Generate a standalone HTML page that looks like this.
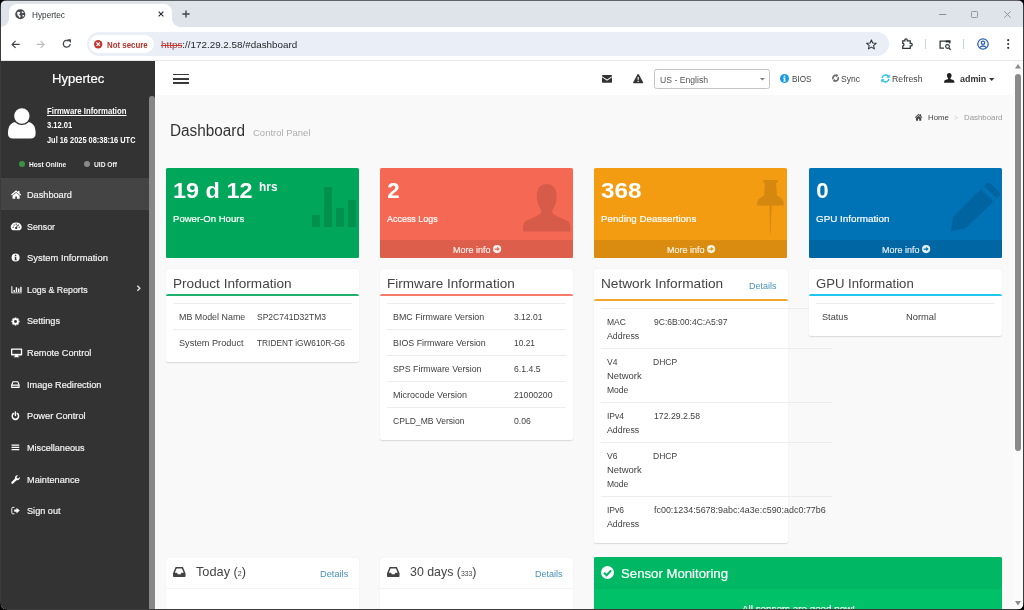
<!DOCTYPE html>
<html lang="en"><head><meta charset="utf-8"><title>Hypertec</title>
<style>
*{box-sizing:border-box;margin:0;padding:0}
html,body{width:1024px;height:610px;overflow:hidden;background:#000;font-family:"Liberation Sans",Arial,sans-serif}
.abs,.t,.i{position:absolute}
.t{white-space:nowrap;line-height:1;transform-origin:0 50%;display:block}
.i{display:block;overflow:visible}
#win{will-change:transform;position:absolute;left:0;top:0;width:1024px;height:610px;border-radius:7px 7px 8px 8px;overflow:hidden;background:#3b3b3b}
#tabstrip{left:1px;top:1px;width:1022px;height:26.4px;background:#dfe3ea}
#tab{left:8px;top:3.2px;width:163px;height:23.2px;background:#fff;border-radius:8px 8px 0 0}
#tab:before,#tab:after{content:"";position:absolute;bottom:0;width:8px;height:8px;background:radial-gradient(circle at 0 0,rgba(255,255,255,0) 7.5px,#fff 8px)}
#tab:before{left:-8px}
#tab:after{right:-8px;background:radial-gradient(circle at 100% 0,rgba(255,255,255,0) 7.5px,#fff 8px)}
#toolbar{left:1px;top:27.4px;width:1022px;height:33.6px;background:#fff;border-bottom:1px solid #e3e6ea}
#omni{left:85.5px;top:5px;width:802px;height:23.7px;border-radius:12px;background:#eaeff7}
#chip{left:2.5px;top:2.5px;width:65px;height:18.6px;border-radius:10px;background:#fff}
#page{left:1px;top:61px;width:1022px;height:547.5px;background:#f9f9f9;overflow:hidden}
#sidebar{left:0;top:0;width:154px;height:548px;background:#333}
#topbar{left:154px;top:0;width:858px;height:34px;background:#fff}
#content{left:154px;top:34px;width:858px;height:514px;background:#f9f9f9}
#vscroll{left:1011.5px;top:0;width:11px;height:548px;background:#fbfbfb}
.sbox{position:absolute;top:72.6px;width:193px;height:90.4px;border-radius:1.5px;overflow:hidden}
.sbox .ft{position:absolute;left:0;top:72.3px;width:100%;height:18.1px;background:rgba(0,0,0,.1)}
.box{position:absolute;background:#fff;border-radius:2px;box-shadow:0 .7px 1.2px rgba(0,0,0,.13)}
.box .ln{position:absolute;left:0;width:100%;height:4px;border-top:2px solid;border-radius:2px 2px 0 0;opacity:.88}
.sep{position:absolute;height:1px;background:#ececec}
</style></head>
<body>
<div id="win">
<div class="abs" style="left:0;top:0;width:1024px;height:1px;background:#5f6267"></div>
<div id="tabstrip" class="abs">
<div id="tab" class="abs">
<svg class="i" style="left:6.00px;top:4.90px" width="10.60" height="10.60" viewBox="0 0 16 16" ><circle cx="8" cy="8" r="7.6" fill="#474a4f"/><path fill="#fff" d="M3.2 5.2 Q5 3.6 7 4.4 Q8.6 5.4 7.6 6.8 Q6.2 7.4 6.4 8.8 Q7.6 9.4 8.6 10.4 Q8.4 12.4 6.8 13.4 Q6 11.6 5.2 10.4 Q3.2 9.4 3.4 7.4 Z M10.2 3.4 Q12.4 3.6 13.4 5.6 Q12.2 6.6 10.8 6 Q9.8 4.8 10.2 3.4 Z M11.4 8.6 Q13 8.6 13.8 9.4 Q13.4 11.2 12 12.2 Q11 10.6 11.4 8.6 Z"/></svg>
<span class="t" id="t0" style="left:23.00px;top:6.59px;font-size:8.4px;color:#33363a;transform:scaleX(0.9846);">Hypertec</span>
<svg class="i" style="left:148.80px;top:7.20px" width="6.00" height="6.00" viewBox="0 0 10 10" ><path stroke="#2a2c30" stroke-width="1.9" d="M1 1 L9 9 M9 1 L1 9"/></svg>
</div>
<svg class="i" style="left:181.00px;top:9.20px" width="8.00" height="8.00" viewBox="0 0 10 10" ><path stroke="#41454b" stroke-width="1.7" d="M5 0.5 V9.5 M0.5 5 H9.5"/></svg>
<svg class="i" style="left:938.40px;top:12.60px" width="7.20" height="1.00" viewBox="0 0 10 1" preserveAspectRatio="none"><rect width="10" height="1" fill="#8b8f96"/></svg>
<svg class="i" style="left:970.30px;top:10.20px" width="7.00" height="7.00" viewBox="0 0 10 10" ><rect x="0.7" y="0.7" width="8.6" height="8.6" rx="1.2" fill="none" stroke="#8b8f96" stroke-width="1.3"/></svg>
<svg class="i" style="left:1002.50px;top:10.20px" width="7.00" height="7.00" viewBox="0 0 10 10" ><path stroke="#8b8f96" stroke-width="1.3" d="M0.5 0.5 L9.5 9.5 M9.5 0.5 L0.5 9.5"/></svg>
</div>
<div id="toolbar" class="abs">
<svg class="i" style="left:10.40px;top:12.60px" width="9.20" height="8.80" viewBox="0 0 12 12" ><path fill="none" stroke="#41454b" stroke-width="1.6" d="M11.5 6 H1.5 M6 1.2 L1.2 6 L6 10.8"/></svg>
<svg class="i" style="left:35.40px;top:12.60px" width="9.20" height="8.80" viewBox="0 0 12 12" ><path fill="none" stroke="#b9bcc1" stroke-width="1.6" d="M0.5 6 H10.5 M6 1.2 L10.8 6 L6 10.8"/></svg>
<svg class="i" style="left:60.70px;top:12.10px" width="9.60" height="9.60" viewBox="0 0 12 12" ><path fill="none" stroke="#41454b" stroke-width="1.6" d="M10.2 6.2 A4.3 4.3 0 1 1 8.6 2.6"/><path fill="#41454b" d="M6.4 0.2 H11.2 V5 Z"/></svg>
<div id="omni" class="abs">
<div id="chip" class="abs"></div>
<svg class="i" style="left:7.30px;top:7.80px" width="8.40" height="8.40" viewBox="0 0 12 12" ><circle cx="6" cy="6" r="6" fill="#c5362e"/><path stroke="#fff" stroke-width="1.7" d="M3.6 3.6 L8.4 8.4 M8.4 3.6 L3.6 8.4"/></svg>
<span class="t" id="t1" style="left:20.50px;top:8.77px;font-size:8.3px;color:#b3322b;font-weight:700;transform:scaleX(0.9489);">Not secure</span>
<span class="t" id="t2" style="left:74.30px;top:7.77px;font-size:9.6px;color:#24272b;transform:scaleX(1.0253);"><span style="color:#a3383a;text-decoration:line-through;text-decoration-color:#d0362e">https</span>://172.29.2.58/#dashboard</span>
<svg class="i" style="left:779.85px;top:6.60px" width="10.80" height="10.80" viewBox="0 0 12 12" ><path fill="none" stroke="#30343a" stroke-width="1.15" stroke-linejoin="round" d="M6 1 L7.5 4.5 L11.3 4.8 L8.4 7.3 L9.3 11 L6 9 L2.7 11 L3.6 7.3 L0.7 4.8 L4.5 4.5 Z"/></svg>
</div>
<svg class="i" style="left:900.30px;top:11.00px" width="12.20" height="11.30" viewBox="0 0 14 13" ><path fill="none" stroke="#30343a" stroke-width="1.45" d="M2 3.4 H4.4 V2.3 Q4.4 0.9 5.8 0.9 Q7.2 0.9 7.2 2.3 V3.4 H10.6 V6.3 H11.6 Q12.9 6.3 12.9 7.7 Q12.9 9.1 11.6 9.1 H10.6 V12 H2 V9.3 Q3.4 9.3 3.4 7.7 Q3.4 6.1 2 6.1 Z"/></svg>
<div class="abs" style="left:924.2px;top:11.600000000000001px;width:1px;height:10.5px;background:#c9d2e3"></div>
<svg class="i" style="left:937.80px;top:12.20px" width="12.40" height="10.20" viewBox="0 0 14 12" ><path fill="none" stroke="#30343a" stroke-width="1.5" d="M5.6 9.6 H1 V1.2 H12.4 V4"/><rect x="7.6" y="0.5" width="5.5" height="2.4" fill="#30343a"/><circle cx="9.7" cy="7.7" r="2.2" fill="none" stroke="#30343a" stroke-width="1.35"/><path stroke="#30343a" stroke-width="1.6" d="M11.3 9.3 L13.4 11.4"/></svg>
<div class="abs" style="left:962.4px;top:11.600000000000001px;width:1px;height:10.5px;background:#c9d2e3"></div>
<svg class="i" style="left:975.70px;top:10.90px" width="12.00" height="12.00" viewBox="0 0 12 12" ><circle cx="6" cy="6" r="5.2" fill="none" stroke="#2b5bb8" stroke-width="1.25"/><circle cx="6" cy="4.7" r="1.7" fill="none" stroke="#2b5bb8" stroke-width="1.25"/><path fill="none" stroke="#2b5bb8" stroke-width="1.25" d="M2.6 9.6 Q6 6.4 9.4 9.6"/></svg>
<svg class="i" style="left:1005.60px;top:12.00px" width="2.40" height="10.00" viewBox="0 0 2.4 10" ><circle cx="1.2" cy="1.2" r="1.1" fill="#30343a"/><circle cx="1.2" cy="5" r="1.1" fill="#30343a"/><circle cx="1.2" cy="8.8" r="1.1" fill="#30343a"/></svg>
</div>
<div id="page" class="abs">
<aside id="sidebar" class="abs">
<span class="t" id="t3" style="left:50.75px;top:12.49px;font-size:12.3px;color:#fff;-webkit-text-stroke:.18px;transform:scaleX(1.0616);">Hypertec</span>
<svg class="i" style="left:6.80px;top:47.30px" width="27.60" height="30.60" viewBox="0 0 27.8 30.6" ><path fill="#fff" d="M0 25.5 Q0 13.8 9.5 13.8 H18.3 Q27.8 13.8 27.8 25.5 Q27.8 30.6 22.8 30.6 H5 Q0 30.6 0 25.5 Z"/><circle cx="13.95" cy="8" r="9.1" fill="#333"/><circle cx="13.95" cy="8" r="7.75" fill="#fff"/></svg>
<span class="t" id="t4" style="left:45.50px;top:45.50px;font-size:8.5px;color:#fff;font-weight:700;transform:scaleX(0.9148);text-decoration:underline;">Firmware Information</span>
<span class="t" id="t5" style="left:45.50px;top:60.30px;font-size:8.5px;color:#fff;font-weight:700;transform:scaleX(0.8916);">3.12.01</span>
<span class="t" id="t6" style="left:45.50px;top:75.20px;font-size:8.5px;color:#fff;font-weight:700;transform:scaleX(0.8711);">Jul 16 2025 08:38:16 UTC</span>
<div class="abs" style="left:17.8px;top:99.80000000000001px;width:6.4px;height:6.4px;border-radius:50%;background:#3b9342"></div>
<span class="t" id="t7" style="left:27.75px;top:99.74px;font-size:7.4px;color:#f4f4f4;font-weight:700;transform:scaleX(0.8979);">Host Online</span>
<div class="abs" style="left:83px;top:99.80000000000001px;width:6.4px;height:6.4px;border-radius:50%;background:#8a8a8a"></div>
<span class="t" id="t8" style="left:93.00px;top:99.74px;font-size:7.4px;color:#f4f4f4;font-weight:700;transform:scaleX(0.9036);">UID Off</span>
<div class="abs" style="left:0;top:116.6px;width:154px;height:32px;background:#444"></div>
<svg class="i" style="left:10.20px;top:129.00px" width="10.20" height="9.40" viewBox="0 0 16 16" preserveAspectRatio="none"><path fill="#fff" d="M8 0.6 L0 7.8 L1.2 9.2 L8 3.2 L14.8 9.2 L16 7.8 L13.4 5.4 V1.6 H11 V3.2 Z M8 4.6 L2.4 9.4 V15 H6.7 V11 H9.3 V15 H13.6 V9.4 Z"/></svg>
<span class="t" id="t9" style="left:26.40px;top:129.91px;font-size:9.2px;color:#f4f4f4;-webkit-text-stroke:.18px;transform:scaleX(0.9966);">Dashboard</span>
<svg class="i" style="left:9.90px;top:160.93px" width="10.40" height="8.80" viewBox="0 0 16 16" preserveAspectRatio="none"><path fill="#fff" d="M8 1 A7.9 7.9 0 0 0 1.5 14 Q1.8 14.8 2.6 14.8 H13.4 Q14.2 14.8 14.5 14 A7.9 7.9 0 0 0 8 1 Z"/><circle cx="8" cy="11" r="1.9" fill="#333"/><path d="M8 11 L10 5.4" stroke="#333" stroke-width="1.5"/><circle cx="3.4" cy="9.4" r="1.05" fill="#333"/><circle cx="12.6" cy="9.4" r="1.05" fill="#333"/><circle cx="4.8" cy="5.6" r="1.05" fill="#333"/><circle cx="8" cy="4" r="1.05" fill="#333"/><circle cx="11.4" cy="5.6" r="1.05" fill="#333"/></svg>
<span class="t" id="t10" style="left:26.40px;top:161.54px;font-size:9.2px;color:#f4f4f4;-webkit-text-stroke:.18px;transform:scaleX(0.9614);">Sensor</span>
<svg class="i" style="left:10.20px;top:192.36px" width="9.20" height="9.20" viewBox="0 0 16 16" preserveAspectRatio="none"><circle cx="8" cy="8" r="7" fill="#fff"/><path fill="#333" d="M6.9 3.2 H9.1 V5.2 H6.9 Z M6 6.6 H9.2 V11.4 H10.2 V12.8 H5.9 V11.4 H6.9 V8 H6 Z"/></svg>
<span class="t" id="t11" style="left:26.40px;top:193.17px;font-size:9.2px;color:#f4f4f4;-webkit-text-stroke:.18px;transform:scaleX(1.0220);">System Information</span>
<svg class="i" style="left:9.90px;top:223.99px" width="11.20" height="9.20" viewBox="0 0 16 16" preserveAspectRatio="none"><path fill="#fff" d="M0.5 2 H2 V13 H15.5 V14.5 H0.5 Z M3.6 8.5 H5.6 V12 H3.6 Z M6.8 4 H8.8 V12 H6.8 Z M10 6.2 H12 V12 H10 Z M13.2 3 H15.2 V12 H13.2 Z"/></svg>
<span class="t" id="t12" style="left:26.40px;top:224.80px;font-size:9.2px;color:#f4f4f4;-webkit-text-stroke:.18px;transform:scaleX(0.9569);">Logs &amp; Reports</span>
<svg class="i" style="left:135.20px;top:223.79px" width="5.00" height="6.40" viewBox="3 1 9 14" ><path fill="none" stroke="#e4e4e4" stroke-width="3" d="M5 2.5 L10.5 8 L5 13.5"/></svg>
<svg class="i" style="left:10.00px;top:255.72px" width="9.00" height="9.00" viewBox="0 0 16 16" preserveAspectRatio="none"><path fill="#fff" d="M15.25 6.53 L15.25 9.47 L13.32 9.76 L13.00 10.51 L14.17 12.09 L12.09 14.17 L10.51 13.00 L9.76 13.32 L9.47 15.25 L6.53 15.25 L6.24 13.32 L5.49 13.00 L3.91 14.17 L1.83 12.09 L3.00 10.51 L2.68 9.76 L0.75 9.47 L0.75 6.53 L2.68 6.24 L3.00 5.49 L1.83 3.91 L3.91 1.83 L5.49 3.00 L6.24 2.68 L6.53 0.75 L9.47 0.75 L9.76 2.68 L10.51 3.00 L12.09 1.83 L14.17 3.91 L13.00 5.49 L13.32 6.24 Z"/><circle cx="8" cy="8" r="2.5" fill="#333"/></svg>
<span class="t" id="t13" style="left:26.40px;top:256.43px;font-size:9.2px;color:#f4f4f4;-webkit-text-stroke:.18px;transform:scaleX(0.9939);">Settings</span>
<svg class="i" style="left:9.90px;top:286.95px" width="11.20" height="9.80" viewBox="0 0 16 16" preserveAspectRatio="none"><path fill="#fff" d="M1.2 1 H14.8 Q16 1 16 2.2 V11 Q16 12.2 14.8 12.2 H10 L10.4 13.8 H11.8 V15 H4.2 V13.8 H5.6 L6 12.2 H1.2 Q0 12.2 0 11 V2.2 Q0 1 1.2 1 Z"/><rect x="1.9" y="2.9" width="12.2" height="6.6" fill="#333"/></svg>
<span class="t" id="t14" style="left:26.40px;top:288.06px;font-size:9.2px;color:#f4f4f4;-webkit-text-stroke:.18px;transform:scaleX(1.0009);">Remote Control</span>
<svg class="i" style="left:10.20px;top:318.98px" width="8.80" height="9.00" viewBox="0 0 16 16" preserveAspectRatio="none"><path fill="none" stroke="#fff" stroke-width="2" stroke-linejoin="round" d="M1.2 9 L3.6 3.2 H12.4 L14.8 9 V13 H1.2 Z M1.2 9 H14.8"/><circle cx="12" cy="11" r="0.7" fill="#fff"/></svg>
<span class="t" id="t15" style="left:26.40px;top:319.69px;font-size:9.2px;color:#f4f4f4;-webkit-text-stroke:.18px;transform:scaleX(0.9978);">Image Redirection</span>
<svg class="i" style="left:10.20px;top:350.41px" width="8.80" height="9.40" viewBox="0 0 16 16" preserveAspectRatio="none"><path fill="none" stroke="#fff" stroke-width="2.7" stroke-linecap="round" d="M4.4 4.2 A5.7 5.7 0 1 0 11.6 4.2 M8 1.6 V7.4"/></svg>
<span class="t" id="t16" style="left:26.40px;top:351.32px;font-size:9.2px;color:#f4f4f4;-webkit-text-stroke:.18px;transform:scaleX(1.0065);">Power Control</span>
<svg class="i" style="left:10.10px;top:382.34px" width="8.80" height="8.80" viewBox="0 0 16 16" preserveAspectRatio="none"><path fill="#fff" d="M1 2.6 H15 V5 H1 Z M1 6.8 H15 V9.2 H1 Z M1 11 H15 V13.4 H1 Z"/></svg>
<span class="t" id="t17" style="left:26.40px;top:382.95px;font-size:9.2px;color:#f4f4f4;-webkit-text-stroke:.18px;transform:scaleX(0.9894);">Miscellaneous</span>
<svg class="i" style="left:10.10px;top:413.77px" width="9.20" height="9.20" viewBox="0 0 16 16" preserveAspectRatio="none"><path fill="#fff" d="M15.3 3.6 L12.6 6.3 L10.4 5.6 L9.7 3.4 L12.4 0.7 A4.4 4.4 0 0 0 7 6.3 L1 12.3 A1.9 1.9 0 0 0 3.7 15 L9.7 9 A4.4 4.4 0 0 0 15.3 3.6 Z"/></svg>
<span class="t" id="t18" style="left:26.40px;top:414.58px;font-size:9.2px;color:#f4f4f4;-webkit-text-stroke:.18px;transform:scaleX(0.9998);">Maintenance</span>
<svg class="i" style="left:10.10px;top:445.40px" width="9.20" height="9.20" viewBox="0 0 16 16" preserveAspectRatio="none"><path fill="none" stroke="#fff" stroke-width="1.6" d="M6 2.4 H3 Q1.4 2.4 1.4 4 V12 Q1.4 13.6 3 13.6 H6"/><path fill="#fff" d="M5.6 6 H9.6 V3 L15.2 8 L9.6 13 V10 H5.6 Z"/></svg>
<span class="t" id="t19" style="left:26.40px;top:446.21px;font-size:9.2px;color:#f4f4f4;-webkit-text-stroke:.18px;transform:scaleX(0.9965);">Sign out</span>
<div class="abs" style="left:148.3px;top:35.3px;width:5.7px;height:520px;background:#878787;border-radius:3px 3px 0 0"></div>
</aside>
<header id="topbar" class="abs">
<div class="abs" style="left:18.19999999999999px;top:12.75px;width:15.6px;height:1.7px;background:#3a3a3a"></div>
<div class="abs" style="left:18.19999999999999px;top:16.85000000000001px;width:15.6px;height:1.7px;background:#3a3a3a"></div>
<div class="abs" style="left:18.19999999999999px;top:20.950000000000003px;width:15.6px;height:1.7px;background:#3a3a3a"></div>
<svg class="i" style="left:447.25px;top:14.30px" width="10.00" height="7.80" viewBox="0.5 2 15 12" preserveAspectRatio="none"><path fill="#333" d="M0.5 3.2 Q0.5 2 1.7 2 H14.3 Q15.5 2 15.5 3.2 V3.8 L8 9 L0.5 3.8 Z M0.5 5.6 L8 10.8 L15.5 5.6 V12.8 Q15.5 14 14.3 14 H1.7 Q0.5 14 0.5 12.8 Z"/></svg>
<svg class="i" style="left:478.00px;top:12.80px" width="10.30" height="9.30" viewBox="0 0.8 16 14" preserveAspectRatio="none"><path fill="#333" d="M8 0.8 Q8.7 0.8 9.1 1.5 L15.7 13.4 Q16.3 14.8 14.8 14.8 H1.2 Q-0.3 14.8 0.3 13.4 L6.9 1.5 Q7.3 0.8 8 0.8 Z"/><path fill="#fff" d="M7 5.2 H9 L8.7 10 H7.3 Z M7.1 11 H8.9 V12.9 H7.1 Z"/></svg>
<div class="abs" style="left:499px;top:8px;width:116px;height:19.5px;border:1px solid #c4c4c4;border-radius:2.5px;background:#fff"></div>
<span class="t" id="t20" style="left:505.25px;top:14.91px;font-size:9.2px;color:#555;transform:scaleX(0.9400);">US - English</span>
<svg class="i" style="left:604.80px;top:16.60px" width="4.80" height="2.60" viewBox="2 5 12 6.5" preserveAspectRatio="none"><path fill="#777" d="M2 5 H14 L8 11.5 Z"/></svg>
<svg class="i" style="left:625.20px;top:13.00px" width="9.00" height="9.00" viewBox="1 1 14 14" ><circle cx="8" cy="8" r="7" fill="#1a9de0"/><path fill="#fff" d="M6.9 3.2 H9.1 V5.2 H6.9 Z M6 6.6 H9.2 V11.4 H10.2 V12.8 H5.9 V11.4 H6.9 V8 H6 Z"/></svg>
<span class="t" id="t21" style="left:636.50px;top:13.81px;font-size:9.2px;color:#444;transform:scaleX(0.8876);">BIOS</span>
<svg class="i" style="left:677.00px;top:13.10px" width="7.20" height="8.40" viewBox="1 0 14 16" preserveAspectRatio="none"><path fill="none" stroke="#6c6c6c" stroke-width="3.2" d="M3.2 10.2 A5.2 5.2 0 0 1 9.6 3.1 M12.8 5.8 A5.2 5.2 0 0 1 6.4 12.9"/><path fill="#6c6c6c" d="M8.2 0.2 L13.6 2.6 L9.4 6.8 Z M7.8 15.8 L2.4 13.4 L6.6 9.2 Z"/></svg>
<span class="t" id="t22" style="left:686.00px;top:13.81px;font-size:9.2px;color:#444;transform:scaleX(0.9297);">Sync</span>
<svg class="i" style="left:726.00px;top:13.00px" width="9.00" height="9.00" viewBox="0.5 0.5 15 15" ><path fill="none" stroke="#22bfe6" stroke-width="2.4" d="M2.2 7.2 A6 6 0 0 1 12.6 4.2 M13.8 8.8 A6 6 0 0 1 3.4 11.8"/><path fill="#22bfe6" d="M9.4 6.6 H15 V1 Z M6.6 9.4 H1 V15 Z"/></svg>
<span class="t" id="t23" style="left:737.00px;top:13.81px;font-size:9.2px;color:#444;transform:scaleX(0.9480);">Refresh</span>
<svg class="i" style="left:788.70px;top:12.00px" width="10.50" height="9.70" viewBox="0.8 0.6 14.4 14.4" preserveAspectRatio="none"><path fill="#222" d="M8 0.6 C10.2 0.6 11.2 2.2 11.2 4.4 C11.2 6.2 10.4 7.6 9.6 8.4 V9.6 C11.4 10.4 14.4 11 14.8 12.4 L15.2 15 H0.8 L1.2 12.4 C1.6 11 4.6 10.4 6.4 9.6 V8.4 C5.6 7.6 4.8 6.2 4.8 4.4 C4.8 2.2 5.8 0.6 8 0.6 Z"/></svg>
<span class="t" id="t24" style="left:804.70px;top:14.01px;font-size:9.2px;color:#333;font-weight:700;transform:scaleX(0.9718);">admin</span>
<svg class="i" style="left:834.20px;top:16.70px" width="5.40" height="3.00" viewBox="2 5 12 6.5" preserveAspectRatio="none"><path fill="#333" d="M2 5 H14 L8 11.5 Z"/></svg>
</header>
<main id="content" class="abs">
<span class="t" id="t25" style="left:15.00px;top:28.09px;font-size:15.6px;color:#333;transform:scaleX(0.9830);">Dashboard</span>
<span class="t" id="t26" style="left:97.50px;top:33.91px;font-size:9.2px;color:#adadad;transform:scaleX(1.0328);">Control Panel</span>
<svg class="i" style="left:759.90px;top:18.80px" width="7.20" height="6.60" viewBox="0.3 1.2 15.4 13.4" preserveAspectRatio="none"><path fill="#444" d="M8 0.6 L0 7.8 L1.2 9.2 L8 3.2 L14.8 9.2 L16 7.8 L13.4 5.4 V1.6 H11 V3.2 Z M8 4.6 L2.4 9.4 V15 H6.7 V11 H9.3 V15 H13.6 V9.4 Z"/></svg>
<span class="t" id="t27" style="left:773.00px;top:19.35px;font-size:7.5px;color:#444;transform:scaleX(1.0392);">Home</span>
<span class="t" id="t28" style="left:799.00px;top:19.35px;font-size:7.5px;color:#ccc;transform:scaleX(0.9110);">&gt;</span>
<span class="t" id="t29" style="left:808.60px;top:19.35px;font-size:7.5px;color:#999;transform:scaleX(1.0462);">Dashboard</span>
<div class="sbox" style="left:11px;background:#00a65a">
<div class="abs" style="left:146px;top:47.900000000000006px;width:8px;height:12.0px;background:rgba(0,0,0,.125)"></div>
<div class="abs" style="left:158px;top:19.900000000000006px;width:8px;height:40.0px;background:rgba(0,0,0,.125)"></div>
<div class="abs" style="left:170px;top:40.400000000000006px;width:7.5px;height:19.5px;background:rgba(0,0,0,.125)"></div>
<div class="abs" style="left:181.5px;top:32.400000000000006px;width:8.0px;height:27.5px;background:rgba(0,0,0,.125)"></div>
<span class="t" id="t30" style="left:7.00px;top:12.52px;font-size:22.3px;color:#fff;font-weight:700;transform:scaleX(1.0512);">19 d 12</span>
<span class="t" id="t31" style="left:93.00px;top:13.69px;font-size:12.3px;color:#fff;font-weight:700;transform:scaleX(0.9665);">hrs</span>
<span class="t" id="t32" style="left:7.30px;top:47.71px;font-size:9.2px;color:#fff;-webkit-text-stroke:.18px;transform:scaleX(1.0406);">Power-On Hours</span>
</div>
<div class="sbox" style="left:225px;background:#f56954">
<span class="t" id="t33" style="left:7.30px;top:12.52px;font-size:22.3px;color:#fff;font-weight:700;">2</span>
<svg class="i" style="left:142.50px;top:16.40px" width="47.50" height="47.50" viewBox="0 0 100 100" ><path fill="rgba(0,0,0,.125)" d="M50 0 C64 0 71 10 71 25 C71 38 67 48 62 54 V61 C68 68 84 72 94 78 C99 81 100 88 100 100 H0 C0 88 1 81 6 78 C16 72 32 68 38 61 V54 C33 48 29 38 29 25 C29 10 36 0 50 0 Z"/></svg>
<span class="t" id="t34" style="left:7.30px;top:47.71px;font-size:9.2px;color:#fff;-webkit-text-stroke:.18px;transform:scaleX(0.9732);">Access Logs</span>
<div class="ft"></div>
<span class="t" id="t35" style="left:72.50px;top:77.94px;font-size:8.7px;color:rgba(255,255,255,.85);-webkit-text-stroke:.18px;transform:scaleX(1.0354);">More info</span>
<svg class="i" style="left:113.00px;top:77.30px" width="8.20" height="8.20" viewBox="0.8 0.8 14.4 14.4" ><circle cx="8" cy="8" r="7.2" fill="rgba(255,255,255,.9)"/><path fill="#f56954" d="M3.6 6.9 H8 V4 L12.6 8 L8 12 V9.1 H3.6 Z"/></svg>
</div>
<div class="sbox" style="left:439px;background:#f39c12">
<span class="t" id="t36" style="left:7.30px;top:12.52px;font-size:22.3px;color:#fff;font-weight:700;transform:scaleX(1.0886);">368</span>
<svg class="i" style="left:163.00px;top:12.70px" width="27.00" height="55.00" viewBox="0 0 27 55" ><path fill="rgba(0,0,0,.125)" d="M8 0 H19.5 Q21 0 21 1.4 Q21 2.8 19.5 2.8 H19 L20 15.5 Q27 18.5 27 24 Q27 25.6 25.6 25.6 H14.6 L13.7 55 H13.3 L12.4 25.6 H1.4 Q0 25.6 0 24 Q0 18.5 7 15.5 L8 2.8 H7.5 Q6 2.8 6 1.4 Q6 0 7.5 0 Z"/></svg>
<span class="t" id="t37" style="left:7.30px;top:47.71px;font-size:9.2px;color:#fff;-webkit-text-stroke:.18px;transform:scaleX(1.0602);">Pending Deassertions</span>
<div class="ft"></div>
<span class="t" id="t38" style="left:72.50px;top:77.94px;font-size:8.7px;color:rgba(255,255,255,.85);-webkit-text-stroke:.18px;transform:scaleX(1.0354);">More info</span>
<svg class="i" style="left:113.00px;top:77.30px" width="8.20" height="8.20" viewBox="0.8 0.8 14.4 14.4" ><circle cx="8" cy="8" r="7.2" fill="rgba(255,255,255,.9)"/><path fill="#f39c12" d="M3.6 6.9 H8 V4 L12.6 8 L8 12 V9.1 H3.6 Z"/></svg>
</div>
<div class="sbox" style="left:654px;background:#0073b7">
<span class="t" id="t39" style="left:7.30px;top:12.52px;font-size:22.3px;color:#fff;font-weight:700;">0</span>
<svg class="i" style="left:142.00px;top:15.90px" width="48.50" height="48.50" viewBox="0 0 100 100" ><path fill="rgba(0,0,0,.125)" d="M0 100 L4 70 L62 12 L88 38 L30 94 Z M68 6 L74 0 Q78 -3 82 1 L99 18 Q103 22 100 26 L94 32 Z"/></svg>
<span class="t" id="t40" style="left:7.30px;top:47.71px;font-size:9.2px;color:#fff;-webkit-text-stroke:.18px;transform:scaleX(1.0728);">GPU Information</span>
<div class="ft"></div>
<span class="t" id="t41" style="left:72.50px;top:77.94px;font-size:8.7px;color:rgba(255,255,255,.85);-webkit-text-stroke:.18px;transform:scaleX(1.0354);">More info</span>
<svg class="i" style="left:113.00px;top:77.30px" width="8.20" height="8.20" viewBox="0.8 0.8 14.4 14.4" ><circle cx="8" cy="8" r="7.2" fill="rgba(255,255,255,.9)"/><path fill="#0073b7" d="M3.6 6.9 H8 V4 L12.6 8 L8 12 V9.1 H3.6 Z"/></svg>
</div>
<section class="box" style="left:11px;top:174px;width:193px;height:92.5px"><div class="ln" style="top:25.15px;border-color:#00a65a"></div><span class="t" id="t42" style="left:7.30px;top:8.13px;font-size:13.2px;color:#444;transform:scaleX(1.0313);">Product Information</span>
<div class="sep" style="left:7px;top:34.0px;width:178.8px"></div>
<div class="sep" style="left:7px;top:60.0px;width:178.8px"></div>
<span class="t" id="t43" style="left:12.50px;top:44.01px;font-size:9.2px;color:#3e3e3e;transform:scaleX(0.9683);">MB Model Name</span>
<span class="t" id="t44" style="left:91.00px;top:44.01px;font-size:9.2px;color:#3e3e3e;transform:scaleX(0.9254);">SP2C741D32TM3</span>
<span class="t" id="t45" style="left:12.50px;top:70.21px;font-size:9.2px;color:#3e3e3e;transform:scaleX(0.9945);">System Product</span>
<span class="t" id="t46" style="left:91.00px;top:70.21px;font-size:9.2px;color:#3e3e3e;transform:scaleX(0.9040);">TRIDENT iGW610R-G6</span>
</section>
<section class="box" style="left:225px;top:174px;width:193px;height:171px"><div class="ln" style="top:25.15px;border-color:#f56954"></div><span class="t" id="t47" style="left:7.30px;top:8.13px;font-size:13.2px;color:#444;transform:scaleX(1.0249);">Firmware Information</span>
<div class="sep" style="left:7px;top:33.69999999999999px;width:178.79999999999995px"></div>
<span class="t" id="t48" style="left:13.00px;top:44.11px;font-size:9.2px;color:#3e3e3e;transform:scaleX(0.9661);">BMC Firmware Version</span>
<span class="t" id="t49" style="left:134.00px;top:44.11px;font-size:9.2px;color:#3e3e3e;transform:scaleX(0.9297);">3.12.01</span>
<div class="sep" style="left:7px;top:59.77999999999997px;width:178.79999999999995px"></div>
<span class="t" id="t50" style="left:13.00px;top:70.19px;font-size:9.2px;color:#3e3e3e;transform:scaleX(0.9663);">BIOS Firmware Version</span>
<span class="t" id="t51" style="left:134.00px;top:70.19px;font-size:9.2px;color:#3e3e3e;transform:scaleX(0.9130);">10.21</span>
<div class="sep" style="left:7px;top:85.86000000000001px;width:178.79999999999995px"></div>
<span class="t" id="t52" style="left:13.00px;top:96.27px;font-size:9.2px;color:#3e3e3e;transform:scaleX(0.9576);">SPS Firmware Version</span>
<span class="t" id="t53" style="left:134.00px;top:96.27px;font-size:9.2px;color:#3e3e3e;transform:scaleX(0.9427);">6.1.4.5</span>
<div class="sep" style="left:7px;top:111.94px;width:178.79999999999995px"></div>
<span class="t" id="t54" style="left:13.00px;top:122.35px;font-size:9.2px;color:#3e3e3e;transform:scaleX(0.9791);">Microcode Version</span>
<span class="t" id="t55" style="left:134.00px;top:122.35px;font-size:9.2px;color:#3e3e3e;transform:scaleX(0.9415);">21000200</span>
<div class="sep" style="left:7px;top:138.01999999999998px;width:178.79999999999995px"></div>
<span class="t" id="t56" style="left:13.00px;top:148.43px;font-size:9.2px;color:#3e3e3e;transform:scaleX(0.9333);">CPLD_MB Version</span>
<span class="t" id="t57" style="left:134.00px;top:148.43px;font-size:9.2px;color:#3e3e3e;transform:scaleX(0.9362);">0.06</span>
</section>
<section class="box" style="left:439px;top:174px;width:194px;height:273.79999999999995px"><div class="ln" style="top:30.15px;border-color:#f39c12"></div><span class="t" id="t58" style="left:7.30px;top:8.13px;font-size:13.2px;color:#444;transform:scaleX(1.0356);">Network Information</span>
<span class="t" id="t59" style="left:155.00px;top:12.85px;font-size:8.8px;color:#4691bd;transform:scaleX(1.0227);">Details</span>
<div class="sep" style="left:7px;top:39.0px;width:230.5px"></div>
<div class="sep" style="left:7px;top:78.75px;width:230.5px"></div>
<div class="sep" style="left:7px;top:132.75px;width:230.5px"></div>
<div class="sep" style="left:7px;top:172.75px;width:230.5px"></div>
<div class="sep" style="left:7px;top:226.75px;width:230.5px"></div>
<span class="t" id="t60" style="left:13.00px;top:48.91px;font-size:9.2px;color:#3e3e3e;transform:scaleX(0.9300);">MAC</span>
<span class="t" id="t61" style="left:13.25px;top:62.91px;font-size:9.2px;color:#3e3e3e;transform:scaleX(0.9564);">Address</span>
<span class="t" id="t62" style="left:59.50px;top:48.91px;font-size:9.2px;color:#3e3e3e;transform:scaleX(0.9284);">9C:6B:00:4C:A5:97</span>
<span class="t" id="t63" style="left:13.00px;top:88.91px;font-size:9.2px;color:#3e3e3e;transform:scaleX(0.9300);">V4</span>
<span class="t" id="t64" style="left:13.25px;top:102.91px;font-size:9.2px;color:#3e3e3e;transform:scaleX(1.0311);">Network</span>
<span class="t" id="t65" style="left:13.00px;top:116.91px;font-size:9.2px;color:#3e3e3e;transform:scaleX(0.9300);">Mode</span>
<span class="t" id="t66" style="left:59.30px;top:88.91px;font-size:9.2px;color:#3e3e3e;transform:scaleX(0.9300);">DHCP</span>
<span class="t" id="t67" style="left:13.00px;top:143.11px;font-size:9.2px;color:#3e3e3e;transform:scaleX(0.9300);">IPv4</span>
<span class="t" id="t68" style="left:13.25px;top:157.11px;font-size:9.2px;color:#3e3e3e;transform:scaleX(0.9564);">Address</span>
<span class="t" id="t69" style="left:59.50px;top:143.11px;font-size:9.2px;color:#3e3e3e;transform:scaleX(0.9475);">172.29.2.58</span>
<span class="t" id="t70" style="left:13.00px;top:183.11px;font-size:9.2px;color:#3e3e3e;transform:scaleX(0.9300);">V6</span>
<span class="t" id="t71" style="left:13.25px;top:197.11px;font-size:9.2px;color:#3e3e3e;transform:scaleX(1.0311);">Network</span>
<span class="t" id="t72" style="left:13.00px;top:211.11px;font-size:9.2px;color:#3e3e3e;transform:scaleX(0.9300);">Mode</span>
<span class="t" id="t73" style="left:59.30px;top:183.11px;font-size:9.2px;color:#3e3e3e;transform:scaleX(0.9300);">DHCP</span>
<span class="t" id="t74" style="left:13.00px;top:237.31px;font-size:9.2px;color:#3e3e3e;transform:scaleX(0.9300);">IPv6</span>
<span class="t" id="t75" style="left:13.25px;top:251.31px;font-size:9.2px;color:#3e3e3e;transform:scaleX(0.9564);">Address</span>
<span class="t" id="t76" style="left:59.50px;top:237.31px;font-size:9.2px;color:#3e3e3e;transform:scaleX(0.9716);">fc00:1234:5678:9abc:4a3e:c590:adc0:77b6</span>
</section>
<section class="box" style="left:654px;top:174px;width:193.3px;height:67.19999999999999px"><div class="ln" style="top:25.15px;border-color:#00c0ef"></div><span class="t" id="t77" style="left:7.30px;top:8.13px;font-size:13.2px;color:#444;transform:scaleX(0.9947);">GPU Information</span>
<div class="sep" style="left:7px;top:33.89999999999998px;width:178.79999999999995px"></div>
<span class="t" id="t78" style="left:12.60px;top:44.11px;font-size:9.2px;color:#3e3e3e;transform:scaleX(0.9982);">Status</span>
<span class="t" id="t79" style="left:97.40px;top:44.11px;font-size:9.2px;color:#3e3e3e;transform:scaleX(1.0166);">Normal</span>
</section>
<section class="box" style="left:11px;top:462.5px;width:193px;height:80px">
<div class="sep" style="left:0;top:30px;width:193px;background:#f4f4f4"></div>
<svg class="i" style="left:6.50px;top:9.50px" width="12.50" height="10.00" viewBox="0.4 2 15.2 12" preserveAspectRatio="none"><path fill="#444" d="M3.6 2 H12.4 L15.6 9.6 V13 Q15.6 14 14.6 14 H1.4 Q0.4 14 0.4 13 V9.6 Z"/><path fill="#fff" d="M4.8 3.8 H11.2 L13.4 9 H10.6 L9.8 10.8 H6.2 L5.4 9 H2.6 Z"/></svg>
<span class="t" id="t80" style="left:29.50px;top:7.94px;font-size:13.3px;color:#444;transform:scaleX(0.9584);">Today (<span style="font-size:7.4px">2</span>)</span>
<span class="t" id="t81" style="left:153.75px;top:12.95px;font-size:8.8px;color:#4691bd;transform:scaleX(1.0506);">Details</span>
</section>
<section class="box" style="left:225px;top:462.5px;width:193px;height:80px">
<div class="sep" style="left:0;top:30px;width:193px;background:#f4f4f4"></div>
<svg class="i" style="left:6.50px;top:9.50px" width="12.50" height="10.00" viewBox="0.4 2 15.2 12" preserveAspectRatio="none"><path fill="#444" d="M3.6 2 H12.4 L15.6 9.6 V13 Q15.6 14 14.6 14 H1.4 Q0.4 14 0.4 13 V9.6 Z"/><path fill="#fff" d="M4.8 3.8 H11.2 L13.4 9 H10.6 L9.8 10.8 H6.2 L5.4 9 H2.6 Z"/></svg>
<span class="t" id="t82" style="left:29.50px;top:7.94px;font-size:13.3px;color:#444;transform:scaleX(0.9303);">30 days (<span style="font-size:7.4px">333</span>)</span>
<span class="t" id="t83" style="left:154.50px;top:12.95px;font-size:8.8px;color:#4691bd;transform:scaleX(1.0227);">Details</span>
</section>
<section class="abs" style="left:439px;top:462.29999999999995px;width:408.3px;height:80px;border-radius:2px;background:#00c068;overflow:hidden">
<div class="abs" style="left:0;top:0;width:100%;height:32px;background:#00b864"></div>
<svg class="i" style="left:7.00px;top:9.20px" width="13.00" height="13.00" viewBox="0.8 0.8 14.4 14.4" ><circle cx="8" cy="8" r="7.2" fill="#fff"/><path fill="none" stroke="#00b864" stroke-width="2.3" d="M4 8.2 L7 11 L12 5.6"/></svg>
<span class="t" id="t84" style="left:27.00px;top:9.23px;font-size:13.2px;color:#fff;-webkit-text-stroke:.18px;transform:scaleX(0.9997);">Sensor Monitoring</span>
<span class="t" id="t85" style="left:147.50px;top:47.61px;font-size:9.2px;color:#fff;-webkit-text-stroke:.18px;transform:scaleX(1.0689);">All sensors are good now!</span>
</section>
</main>
<div id="vscroll" class="abs">
<svg class="i" style="left:2.50px;top:3.30px" width="6.00" height="4.40" viewBox="0 0 6 4.4" ><path fill="#8a8a8a" d="M3 0 L6 4.4 H0 Z"/></svg>
<div class="abs" style="left:2.5px;top:12.700000000000003px;width:6px;height:377.3px;border-radius:3px;background:#8a8a8a"></div>
<svg class="i" style="left:2.50px;top:540.40px" width="6.00" height="4.40" viewBox="0 0 6 4.4" ><path fill="#8a8a8a" d="M0 0 H6 L3 4.4 Z"/></svg>
</div>
</div>
</div>
</body></html>
